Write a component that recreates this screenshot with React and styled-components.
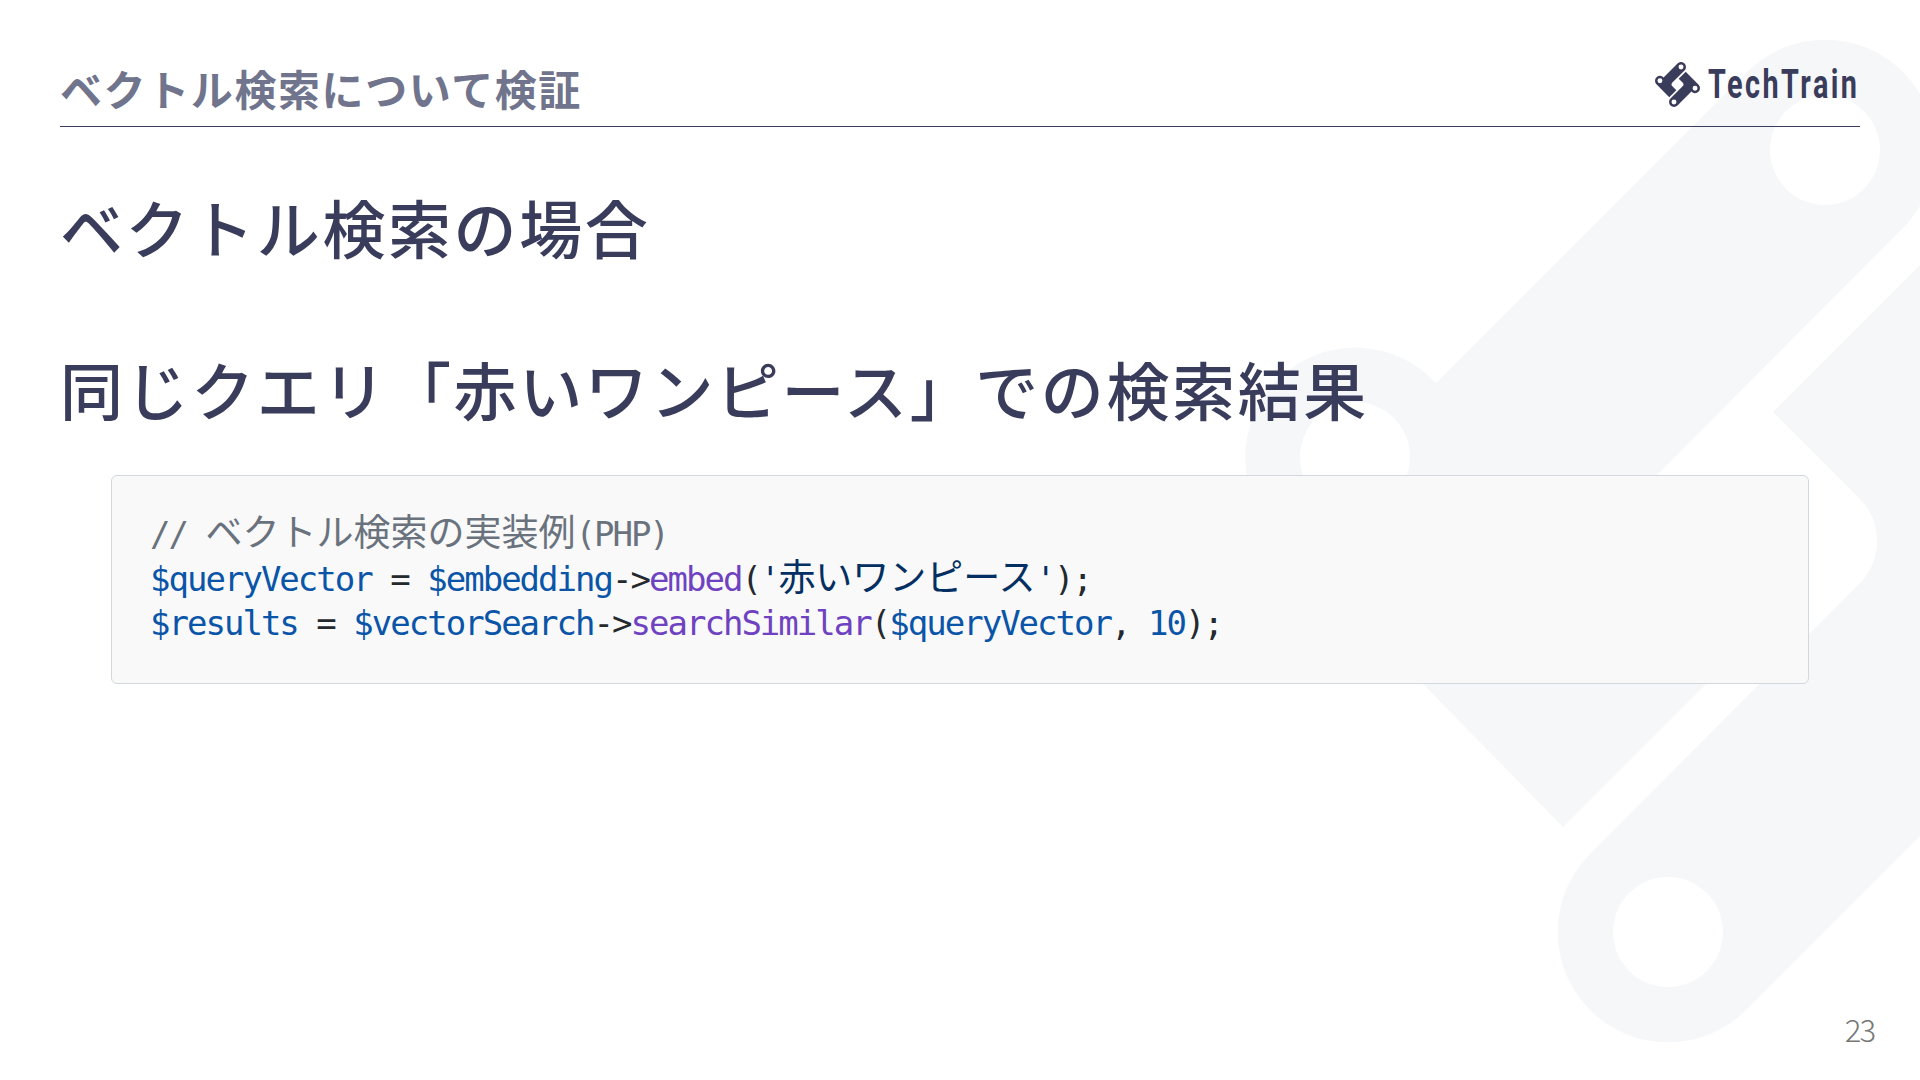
import styled, { createGlobalStyle } from "styled-components";

const UPPER =
  "M1436 383L1747 72A110 110 0 0 1 1903 228L1633 499A60 60 0 0 0 1633 583L1720 670L1563 827L1277 535A110 110 0 1 1 1436 383Z";
const LOWER =
  "M2057 699L1746 1010A110 110 0 0 1 1590 854L1860 583A60 60 0 0 0 1860 499L1773 412L1930 255L2216 547A110 110 0 1 1 2057 699Z";

const hole = (cx, cy) =>
  `M${cx - 55} ${cy}a55 55 0 1 0 110 0a55 55 0 1 0 -110 0Z`;

const MARK =
  UPPER +
  hole(1355, 457) +
  hole(1825, 150) +
  LOWER +
  hole(1668, 932) +
  hole(2138, 625);

const GlobalStyle = createGlobalStyle`
  html, body {
    margin: 0;
    padding: 0;
    background: #fff;
  }
`;

const Slide = styled.div`
  position: relative;
  width: 1920px;
  height: 1080px;
  overflow: hidden;
  background: #fff;
  box-sizing: border-box;
  padding: 0 60px;
  font-family: "Noto Sans CJK JP", "Noto Sans", sans-serif;
  color: #3a3c5c;
`;

const Watermark = styled.svg`
  position: absolute;
  top: 0;
  left: 0;
  width: 1920px;
  height: 1080px;
  fill: #f6f7f9;
`;

const Header = styled.header`
  position: relative;
  height: 127px;
  box-sizing: border-box;
  border-bottom: 1.5px solid #3a3c5c;
  display: flex;
  align-items: flex-end;
  justify-content: space-between;
`;

const Breadcrumb = styled.div`
  font-size: 42px;
  font-weight: 700;
  letter-spacing: 1.6px;
  line-height: 60px;
  padding-bottom: 8px;
  color: #70748c;
`;

const Logo = styled.div`
  display: flex;
  align-items: center;
  gap: 8px;
  margin-right: 2px;
  padding-bottom: 19px;
`;

const LogoMark = styled.svg`
  width: 45px;
  height: 45px;
  fill: #3a3c5c;
`;

const LogoText = styled.span`
  display: block;
  width: 150px;
  font-family: "Roboto", sans-serif;
  font-size: 40px;
  font-weight: 700;
  line-height: 45px;
  letter-spacing: 3.4px;
  white-space: nowrap;
  color: #3a3c5c;
  transform: scaleX(0.72);
  transform-origin: left center;
`;

const Heading = styled.h2`
  position: relative;
  margin: ${(p) => p.$top}px 0 0;
  font-size: 63px;
  font-weight: 500;
  line-height: 92px;
  letter-spacing: 2.6px;
  white-space: nowrap;
`;

const CodeBox = styled.pre`
  position: relative;
  box-sizing: border-box;
  margin: 41px 51px 0;
  height: 209px;
  padding: 36px 38px 0;
  background: #f9f9fa;
  border: 1.5px solid #d3d7de;
  border-radius: 6px;
  font-family: "DejaVu Sans Mono", monospace;
  font-size: 34px;
  letter-spacing: -1.99px;
  line-height: 44.7px;
  color: #24292e;
`;

const Token = styled.span`
  color: ${(p) => p.$color};
`;

// the kana and kanji stay a full 37px square next to the narrow latin
const Wide = styled.span`
  font-family: "Noto Sans CJK JP", sans-serif;
  font-size: 37px;
  line-height: 0;
  letter-spacing: 0;
`;

const PageNumber = styled.div`
  position: absolute;
  right: 46px;
  bottom: 33px;
  font-family: "Noto Sans CJK JP", sans-serif;
  font-size: 31px;
  font-weight: 300;
  letter-spacing: -2px;
  line-height: 36px;
  color: #777;
`;

const VARIABLE = "#0a55a8";
const FUNC = "#6f42c1";
const STRING = "#032f62";
const COMMENT = "#6a737d";

const App = () => {
  return (
    <>
      <GlobalStyle />
      <Slide>
        <Watermark viewBox="0 0 1920 1080">
          <path d={MARK} fillRule="evenodd" />
        </Watermark>
        <Header>
          <Breadcrumb>ベクトル検索について検証</Breadcrumb>
          <Logo>
            <LogoMark viewBox="1245 40 1003 1003">
              <path d={MARK} fillRule="evenodd" />
            </LogoMark>
            <LogoText>TechTrain</LogoText>
          </Logo>
        </Header>
        <Heading $top={53}>ベクトル検索の場合</Heading>
        <Heading $top={70}>同じクエリ「赤いワンピース」での検索結果</Heading>
        <CodeBox>
          <code>
            <Token $color={COMMENT}>
              // <Wide>ベクトル検索の実装例</Wide>(PHP)
            </Token>
            {"\n"}
            <Token $color={VARIABLE}>$queryVector</Token> ={" "}
            <Token $color={VARIABLE}>$embedding</Token>-&gt;
            <Token $color={FUNC}>embed</Token>(
            <Token $color={STRING}>
              '<Wide>赤いワンピース</Wide>'
            </Token>
            );
            {"\n"}
            <Token $color={VARIABLE}>$results</Token> ={" "}
            <Token $color={VARIABLE}>$vectorSearch</Token>-&gt;
            <Token $color={FUNC}>searchSimilar</Token>(
            <Token $color={VARIABLE}>$queryVector</Token>,{" "}
            <Token $color={VARIABLE}>10</Token>);
          </code>
        </CodeBox>
        <PageNumber>23</PageNumber>
      </Slide>
    </>
  );
};

export default App;
